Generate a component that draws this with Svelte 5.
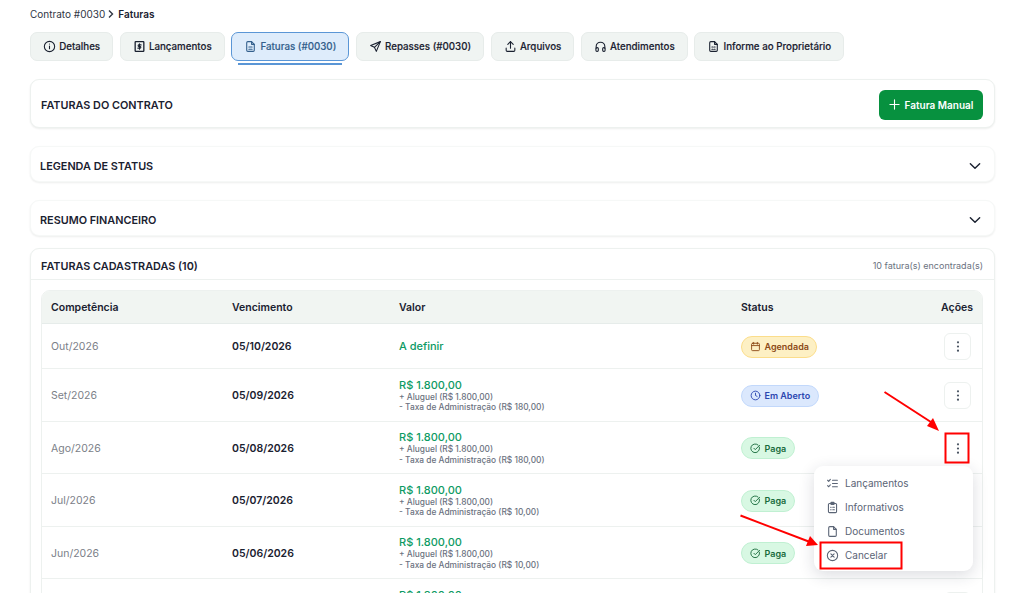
<script>
	const tabs = [
		{ label: 'Detalhes', icon: 'info' },
		{ label: 'Lançamentos', icon: 'money' },
		{ label: 'Faturas (#0030)', icon: 'file', active: true },
		{ label: 'Repasses (#0030)', icon: 'send' },
		{ label: 'Arquivos', icon: 'upload' },
		{ label: 'Atendimentos', icon: 'headset' },
		{ label: 'Informe ao Proprietário', icon: 'report' }
	];

	const rows = [
		{ comp: 'Out/2026', venc: '05/10/2026', valor: 'A definir', status: 'agendada' },
		{ comp: 'Set/2026', venc: '05/09/2026', valor: 'R$ 1.800,00', taxa: '180,00', status: 'aberto' },
		{ comp: 'Ago/2026', venc: '05/08/2026', valor: 'R$ 1.800,00', taxa: '180,00', status: 'paga', plain: true },
		{ comp: 'Jul/2026', venc: '05/07/2026', valor: 'R$ 1.800,00', taxa: '10,00', status: 'paga' },
		{ comp: 'Jun/2026', venc: '05/06/2026', valor: 'R$ 1.800,00', taxa: '10,00', status: 'paga' },
		{ comp: 'Mai/2026', venc: '05/05/2026', valor: 'R$ 1.800,00', taxa: '10,00', status: 'paga' }
	];

	const statusLabels = { agendada: 'Agendada', aberto: 'Em Aberto', paga: 'Paga' };
</script>

{#snippet icon(name)}
	<svg class="ico" viewBox="0 0 24 24" fill="none" stroke="currentColor" stroke-width="2" stroke-linecap="round" stroke-linejoin="round">
		{#if name === 'info'}
			<circle cx="12" cy="12" r="9.5" /><path d="M12 11v5" /><path d="M12 7.5h.01" />
		{:else if name === 'money'}
			<rect x="4" y="3" width="16" height="18" rx="1" stroke-width="2.4" /><path d="M15 9h-4a1.5 1.5 0 0 0 0 3h2a1.5 1.5 0 0 1 0 3H9" /><path d="M12 7v10" />
		{:else if name === 'file'}
			<path d="M14 3H7a2 2 0 0 0-2 2v14a2 2 0 0 0 2 2h10a2 2 0 0 0 2-2V8z" /><path d="M14 3v5h5" /><path d="M9 13h6" /><path d="M9 17h6" />
		{:else if name === 'send'}
			<path d="M21 3 3 10l7 3.5L13.500 21z" /><path d="M21 3 10 13.500" />
		{:else if name === 'upload'}
			<path d="M4 15v4a2 2 0 0 0 2 2h12a2 2 0 0 0 2-2v-4" /><path d="m7 8 5-5 5 5" /><path d="M12 3v12" />
		{:else if name === 'headset'}
			<path d="M4 15v-3a8 8 0 0 1 16 0v3" /><rect x="3.500" y="14" width="4.500" height="7" rx="2" /><rect x="16" y="14" width="4.500" height="7" rx="2" />
		{:else if name === 'report'}
			<path d="M14 3H7a2 2 0 0 0-2 2v14a2 2 0 0 0 2 2h10a2 2 0 0 0 2-2V8z" /><path d="M14 3v5h5" /><path d="M9 13h2M13 13h2M9 17h2M13 17h2" />
		{:else if name === 'agendada'}
			<rect x="3.500" y="5" width="17" height="16" rx="2" /><path d="M8 3v4M16 3v4M3.500 10h17" />
		{:else if name === 'aberto'}
			<circle cx="12" cy="12" r="9.500" /><path d="M12 7v5l3.500 2" />
		{:else if name === 'paga'}
			<path d="M20.500 9a9.500 9.500 0 1 1-3-4.700" /><path d="m8.500 11.500 3 3L21 5" />
		{:else if name === 'checks'}
			<path d="m3 6 2 2 3-3.500" /><path d="m3 16 2 2 3-3.500" /><path d="M12 6h9M12 12h9M12 18h9" />
		{:else if name === 'clipboard'}
			<rect x="4.500" y="4.500" width="15" height="17" rx="2" /><rect x="9" y="2.500" width="6" height="4" rx="1" /><path d="M8.500 11.500h1M12.500 11.500h3M8.500 16h1M12.500 16h3" />
		{:else if name === 'doc'}
			<path d="M14 3H7a2 2 0 0 0-2 2v14a2 2 0 0 0 2 2h10a2 2 0 0 0 2-2V8z" /><path d="M14 3v5h5" />
		{:else if name === 'cancel'}
			<circle cx="12" cy="12" r="9.500" /><path d="m9 9 6 6M15 9l-6 6" />
		{/if}
	</svg>
{/snippet}

{#snippet chevron()}
	<svg class="chev" viewBox="0 0 24 24" fill="none" stroke="currentColor" stroke-width="2.4" stroke-linecap="round" stroke-linejoin="round"><path d="m4 8 8 8 8-8" /></svg>
{/snippet}

<div class="page">
	<nav class="crumbs">
		<span>Contrato #0030</span>
		<svg class="sep" viewBox="0 0 10 10" fill="none" stroke="currentColor" stroke-width="1.400"><path d="m3 1.500 3.500 3.500L3 8.500" /></svg>
		<b>Faturas</b>
	</nav>

	<div class="tabs">
		{#each tabs as tab}
			<button class="tab" class:active={tab.active}>
				{@render icon(tab.icon)}
				{tab.label}
			</button>
		{/each}
	</div>

	<section class="card head">
		<h2>FATURAS DO CONTRATO</h2>
		<button class="add">
			<svg viewBox="0 0 12 12" fill="none" stroke="currentColor" stroke-width="1.200" stroke-linecap="round"><path d="M6 1v10M1 6h10" /></svg>
			Fatura Manual
		</button>
	</section>

	<section class="card fold first">
		<h2>LEGENDA DE STATUS</h2>
		{@render chevron()}
	</section>

	<section class="card fold second">
		<h2>RESUMO FINANCEIRO</h2>
		{@render chevron()}
	</section>

	<section class="card list">
		<header>
			<h2>FATURAS CADASTRADAS (10)</h2>
			<span>10 fatura(s) encontrada(s)</span>
		</header>
		<div class="table-wrap">
			<table>
				<thead>
					<tr>
						<th class="c1">Competência</th>
						<th class="c2">Vencimento</th>
						<th class="c3">Valor</th>
						<th class="c4">Status</th>
						<th class="c5">Ações</th>
					</tr>
				</thead>
				<tbody>
					{#each rows as row}
						<tr class:tall={row.taxa}>
							<td class="comp">{row.comp}</td>
							<td class="venc">{row.venc}</td>
							<td>
								<div class="valor">{row.valor}</div>
								{#if row.taxa}
									<div class="det">+ Aluguel (R$ 1.800,00)</div>
									<div class="det">- Taxa de Administração (R$ {row.taxa})</div>
								{/if}
							</td>
							<td>
								<span class="badge {row.status}">
									{@render icon(row.status)}
									{statusLabels[row.status]}
								</span>
							</td>
							<td class="acts">
								<button class="more" class:plain={row.plain} aria-label="Ações">
									<svg viewBox="0 0 4 11" fill="currentColor"><circle cx="2" cy="1.300" r="1.100" /><circle cx="2" cy="5.500" r="1.100" /><circle cx="2" cy="9.700" r="1.100" /></svg>
								</button>
							</td>
						</tr>
					{/each}
				</tbody>
			</table>
		</div>
	</section>

	<ul class="menu">
		<li>{@render icon('checks')}Lançamentos</li>
		<li>{@render icon('clipboard')}Informativos</li>
		<li>{@render icon('doc')}Documentos</li>
		<li>{@render icon('cancel')}Cancelar</li>
	</ul>

	<!-- marcações vermelhas por cima do print -->
	<svg class="marks" viewBox="0 0 1024 593" fill="none">
		<rect x="945.500" y="433.500" width="23" height="29" stroke="#f00" stroke-width="2" />
		<rect x="820.500" y="542.500" width="81" height="26" stroke="#f00" stroke-width="2" />
		<path d="M884.500 392 L934 424" stroke="#f00" stroke-width="2" />
		<path d="M939 431 L927 426 L933 418 Z" fill="#f00" />
		<path d="M740.500 515.500 L810 542" stroke="#f00" stroke-width="2" />
		<path d="M818 545 L806 546 L810 536 Z" fill="#f00" />
	</svg>
</div>

<style>
	:global(body) {
		margin: 0;
		background: #fff;
		overflow: hidden;
	}

	.page {
		position: relative;
		height: 593px;
		overflow: hidden;
		box-sizing: border-box;
		padding: 8px 29px 0 30px;
		font-family: Inter, sans-serif;
		color: #1a2130;
		font-size: 10px;
	}

	.crumbs {
		display: flex;
		align-items: center;
		gap: 1px;
		height: 11px;
		margin-bottom: 13px;
		color: #2f3644;
	}

	.crumbs b {
		font-weight: 600;
		color: #1a2130;
		margin-left: 1px;
	}

	.sep {
		width: 10px;
		height: 10px;
	}

	.ico {
		width: 13px;
		height: 13px;
		flex: none;
	}

	.tabs {
		display: flex;
		gap: 6.500px;
		margin-bottom: 18px;
	}

	.tab {
		display: flex;
		align-items: center;
		gap: 3px;
		height: 29px;
		padding: 0 12.150px 1px;
		background: #f0f4f2;
		border: 1px solid #e7ecea;
		border-radius: 7px;
		font: 500 9.750px Inter, sans-serif;
		-webkit-text-stroke: 0.15px currentColor;
		color: #1a2130;
		position: relative;
		white-space: nowrap;
	}

	.tab.active {
		background: #deecfb;
		border-color: #5a96d6;
		color: #335f8c;
	}

	.tab.active::after {
		content: '';
		position: absolute;
		left: 6px;
		right: 6px;
		bottom: -5px;
		height: 2px;
		background: #5a96d6;
	}

	.card {
		border: 1px solid #edf1ef;
		border-radius: 9px;
		background: #fff;
		box-sizing: border-box;
		box-shadow: 0 1px 2px rgba(20, 40, 30, 0.08);
	}

	h2 {
		margin: 0;
		font-size: 10.850px;
		font-weight: 600;
		color: #1a2130;
	}

	.head {
		height: 49px;
		display: flex;
		align-items: center;
		justify-content: space-between;
		padding: 2px 11px 0 10px;
	}

	.head h2 {
		margin-top: 1px;
	}

	.add {
		display: flex;
		align-items: center;
		gap: 5px;
		height: 30px;
		width: 104px;
		justify-content: center;
		background: #07913f;
		border: 0;
		border-radius: 6px;
		color: #fff;
		font: 600 10px Inter, sans-serif;
	}

	.add svg {
		width: 11px;
		height: 11px;
	}

	.fold {
		height: 36px;
		display: flex;
		align-items: center;
		justify-content: space-between;
		padding: 4px 12px 0 9px;
		border-color: #f6f8f7;
	}

	.first {
		margin-top: 18px;
	}

	.second {
		margin-top: 18px;
		margin-bottom: 12px;
	}

	.chev {
		width: 14px;
		height: 14px;
	}

	.list {
		height: 400px;
	}

	.list header {
		display: flex;
		align-items: center;
		justify-content: space-between;
		height: 31px;
		padding: 3px 11px 0 10px;
		box-sizing: border-box;
		border-bottom: 1px solid #edf1ef;
	}

	.list header span {
		font-size: 9px;
		color: #6b7280;
	}

	.table-wrap {
		margin: 10px 11px 0 10px;
		border: 1px solid #edf1ef;
		border-radius: 9px;
		overflow: hidden;
	}

	table {
		width: 100%;
		border-collapse: collapse;
		table-layout: fixed;
	}

	th, td {
		box-sizing: border-box;
		padding: 2px 9px 0;
	}

	th {
		height: 32px;
		background: #f1f5f2;
		text-align: left;
		font-size: 10.500px;
		font-weight: 600;
		border-bottom: 1px solid #e6ecea;
	}

	.c1 { width: 181px; }
	.c2 { width: 167px; }
	.c3 { width: 342px; }
	.c4 { width: 150px; }

	th.c5 {
		text-align: right;
	}

	td {
		border-bottom: 1px solid #edf1ef;
		height: 45.500px;
		font-size: 10.500px;
	}

	tr.tall td {
		height: 52.500px;
	}

	.comp {
		color: #7b8088;
	}

	td.venc {
		font-size: 10.500px;
		font-weight: 600;
	}

	.valor {
		font-size: 11px;
		font-weight: 500;
		color: #0c9a63;
		line-height: 13px;
	}

	.det {
		font-size: 8.350px;
		font-weight: 500;
		color: #6b7280;
		line-height: 10.500px;
	}

	.badge {
		display: inline-flex;
		align-items: center;
		gap: 4px;
		height: 22px;
		padding: 0 7.500px;
		box-sizing: border-box;
		border-radius: 11px;
		border: 1px solid;
		font-size: 9px;
		font-weight: 600;
	}

	.badge .ico {
		width: 11px;
		height: 11px;
	}

	.agendada {
		background: #fdf0c4;
		border-color: #fbdd8b;
		color: #8c4a17;
	}

	.aberto {
		background: #dbe8fd;
		border-color: #c2d8fb;
		color: #2b46b0;
	}

	.paga {
		background: #d8f8e3;
		border-color: #c0f0d2;
		color: #196b3c;
	}

	td.acts {
		text-align: right;
		padding-right: 11px;
	}

	.more {
		display: inline-flex;
		align-items: center;
		justify-content: center;
		width: 27px;
		height: 27px;
		padding: 0;
		background: #fff;
		border: 1px solid #edf1ef;
		border-radius: 6px;
		color: #4b5563;
		vertical-align: middle;
	}

	.more.plain {
		border-color: transparent;
	}

	.more svg {
		width: 4px;
		height: 11px;
	}

	.menu {
		position: absolute;
		left: 814px;
		top: 466px;
		width: 159px;
		height: 105px;
		box-sizing: border-box;
		margin: 0;
		padding: 5px 0;
		list-style: none;
		background: #fff;
		border-radius: 9px;
		box-shadow: 0 4px 16px rgba(30, 40, 60, 0.16);
	}

	.menu li {
		display: flex;
		align-items: center;
		gap: 6px;
		height: 24px;
		padding-left: 12px;
		font-size: 10px;
		color: #5a6475;
	}

	.menu .ico {
		width: 13px;
		height: 13px;
	}

	.marks {
		position: absolute;
		left: 0;
		top: 0;
		width: 1024px;
		height: 593px;
		pointer-events: none;
	}
</style>
